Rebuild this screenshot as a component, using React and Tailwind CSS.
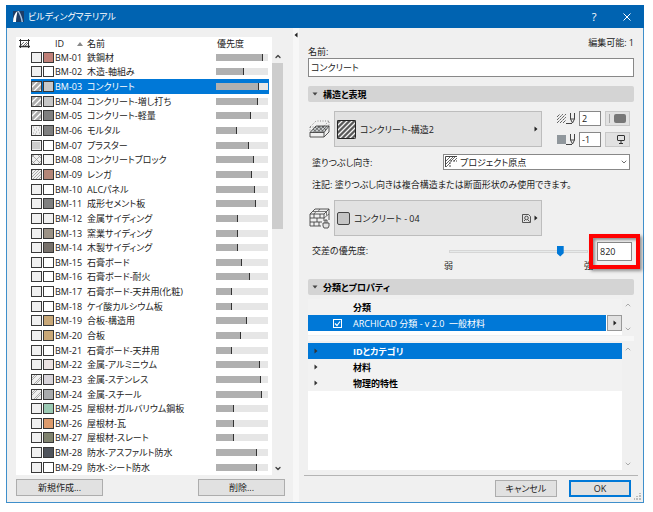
import { useState } from "react";
import clsx from "clsx";
import { ChevronDown, ChevronUp } from "lucide-react";

const MATERIALS = [
  { id: "BM-01", name: "鉄鋼材", color: "#c08078", priority: 90 },
  { id: "BM-02", name: "木造-軸組み", color: "#ffffff", priority: 54 },
  { id: "BM-03", name: "コンクリート", hatch: "wide", color: "#c8c8c8", priority: 83 },
  { id: "BM-04", name: "コンクリート-増し打ち", hatch: "wide", color: "#c8c8c8", priority: 80 },
  { id: "BM-05", name: "コンクリート-軽量", hatch: "wide", color: "#808080", priority: 68 },
  { id: "BM-06", name: "モルタル", hatch: "dots", color: "#808080", priority: 41 },
  { id: "BM-07", name: "プラスター", hatch: "fine", color: "#ffffff", priority: 63 },
  { id: "BM-08", name: "コンクリートブロック", hatch: "cross", color: "#f5f5f5", priority: 73 },
  { id: "BM-09", name: "レンガ", hatch: "dense", color: "#b48678", priority: 70 },
  { id: "BM-10", name: "ALCパネル", color: "#ffffff", priority: 75 },
  { id: "BM-11", name: "成形セメント板", color: "#808080", priority: 77 },
  { id: "BM-12", name: "金属サイディング", color: "#f0f0f0", priority: 42 },
  { id: "BM-13", name: "窯業サイディング", color: "#9c9286", priority: 42 },
  { id: "BM-14", name: "木製サイディング", color: "#77716b", priority: 42 },
  { id: "BM-15", name: "石膏ボード", color: "#ffffff", priority: 50 },
  { id: "BM-16", name: "石膏ボード-耐火", color: "#ffffff", priority: 65 },
  { id: "BM-17", name: "石膏ボード-天井用(化粧)", color: "#ffffff", priority: 31 },
  { id: "BM-18", name: "ケイ酸カルシウム板", color: "#ffffff", priority: 31 },
  { id: "BM-19", name: "合板-構造用", color: "#c9a878", priority: 60 },
  { id: "BM-20", name: "合板", color: "#c9a878", priority: 49 },
  { id: "BM-21", name: "石膏ボード-天井用", color: "#ffffff", priority: 31 },
  { id: "BM-22", name: "金属-アルミニウム", color: "#ebe2e2", priority: 84 },
  { id: "BM-23", name: "金属-ステンレス", hatch: "steel", color: "#d8d4da", priority: 87 },
  { id: "BM-24", name: "金属-スチール", hatch: "steel", color: "#a8aaac", priority: 89 },
  { id: "BM-25", name: "屋根材-ガルバリウム鋼板", color: "#9ccab4", priority: 35 },
  { id: "BM-26", name: "屋根材-瓦", color: "#dc9a6c", priority: 35 },
  { id: "BM-27", name: "屋根材-スレート", color: "#80836f", priority: 35 },
  { id: "BM-28", name: "防水-アスファルト防水", color: "#50545c", priority: 79 },
  { id: "BM-29", name: "防水-シート防水", color: "#ffffff", priority: 79 },
];

const HATCHES = {
  wide: "M-1 8L8 -1M1 12L12 1M7 12L12 7",
  steel: "M0 5L5 0M0 7L7 0M2 11L11 2M4 11L11 4M9 11L11 9",
  dense: "M0 3L3 0M0 6L6 0M0 9L9 0M1 11L11 1M4 11L11 4M7 11L11 7",
  cross: "M0 4L4 0M0 11L11 0M6 11L11 6M0 6L5 11M0 0L11 11M6 0L11 5",
  dots: "M2 2h1M5 3h1M8 2h1M3 5h1M7 5h1M2 8h1M5 7h1M8 8h1M4 9h1",
  fine: "M2 2v7M4 2v7M6 2v7M8 2v7",
};

function Swatch({ hatch, color = "#f0f0f0" }) {
  return (
    <svg width="11" height="11" viewBox="0 0 11 11" className="block shrink-0">
      <rect width="11" height="11" fill={hatch === "wide" ? "#acacac" : color} />
      {hatch && (
        <path
          d={HATCHES[hatch]}
          fill="none"
          stroke={hatch === "wide" ? "#fff" : "#8c8c8c"}
          strokeWidth={hatch === "wide" ? 1.3 : 0.7}
        />
      )}
      <rect x=".5" y=".5" width="10" height="10" fill="none" stroke="#383838" />
    </svg>
  );
}

function Triangle({ dir = "right", className }) {
  const points = {
    right: "1.5,0.5 4.500,3 1.5,5.500",
    left: "4.500,0.5 1.5,3 4.500,5.500",
    down: "0.5,1.5 5.500,1.5 3,4.500",
    up: "0,5 6,5 3,1",
  };
  return (
    <svg width="6" height="6" viewBox="0 0 6 6" className={clsx("shrink-0", className)}>
      <polygon points={points[dir]} fill="currentColor" />
    </svg>
  );
}

function PriorityBar({ value }) {
  return (
    <div className="h-[7px] w-[52px] bg-[#e6e6e6]">
      <div className="h-full border-r border-[#333] bg-[#b0b0b0]" style={{ width: `${value}%` }} />
    </div>
  );
}

function Button({ className, children, ...props }) {
  return (
    <button
      type="button"
      className={clsx("flex items-center justify-center border bg-[#e1e1e1]", className)}
      {...props}
    >
      {children}
    </button>
  );
}

function SectionHeader({ children }) {
  return (
    <h2 className="flex h-4 items-center gap-1 rounded-xs bg-[#d4d4d4] pl-1 font-bold text-black">
      <Triangle dir="down" className="text-[#444]" />
      <span className="pl-px">{children}</span>
    </h2>
  );
}

function MaterialList({ selected, onSelect }) {
  return (
    <div className="flex">
      <table className="h-[438px] w-64 table-fixed border-collapse bg-white text-left">
        <colgroup>
          <col className="w-[15px]" />
          <col className="w-6" />
          <col className="w-8" />
          <col className="w-[129px]" />
          <col className="w-[53px]" />
          <col />
        </colgroup>
        <thead>
          <tr className="h-[13px]">
            <th colSpan={2} className="p-0 pl-[3px]">
              <svg width="11" height="9" viewBox="0 0 11 9" fill="none" stroke="#333">
                <path d="M0 1.5h11M1.5 0v9M9.5 0v9" />
                <path d="M0 7.5h11" strokeWidth="1.500" />
                <path d="M2 6l3-3M4 7l4-4M6 7l3-3" strokeWidth=".7" />
              </svg>
            </th>
            <th className="p-0 font-normal">
              <div className="flex items-center justify-between pr-1">
                ID
                <Triangle dir="up" className="text-[#888]" />
              </div>
            </th>
            <th className="p-0 font-normal">名前</th>
            <th colSpan={2} className="p-0 pl-px font-normal">優先度</th>
          </tr>
        </thead>
        <tbody>
          {MATERIALS.map((m) => {
            const active = m.id === selected;
            const cell = clsx("p-0", active && "bg-[#0078d7] text-white");
            return (
              <tr key={m.id} onClick={() => onSelect(m.id)}>
                <td className="p-0" />
                <td className={cell}>
                  <div className="flex gap-px">
                    <Swatch hatch={m.hatch} />
                    <Swatch color={m.color} />
                  </div>
                </td>
                <td className={cell}>{m.id}</td>
                <td className={clsx(cell, "whitespace-nowrap")}>{m.name}</td>
                <td className={cell}>
                  <PriorityBar value={m.priority} />
                </td>
                <td className="p-0" />
              </tr>
            );
          })}
        </tbody>
      </table>
      <div className="mt-[13px] flex w-[11px] flex-col items-center bg-[#f0f0f0] text-[#444]">
        <ChevronUp className="h-[13px] w-2" strokeWidth={4} />
        <div className="h-[166px] w-full bg-[#cdcdcd]" />
        <ChevronDown className="mt-auto h-[13px] w-2" strokeWidth={4} />
      </div>
    </div>
  );
}

function FillIcon() {
  return (
    <svg width="21" height="20" viewBox="0 0 21 20" fill="none" stroke="#444" strokeWidth=".9">
      <path d="M1 13.500L7 7h13l-5 6.500z" fill="#ccd0d2" />
      <path d="M1 13.500V18h14v-4.500M15 18l5-5V7" />
      <path d="M4 10l4 3.500M6 8l6 5.500M9 7l6 6.500M13 7l4 4M4 13.500L11 7M8 13.500L15 7M12 13.500L18 7" strokeWidth=".7" />
      <path d="M1 8l6-6h13v5M1 8v4M1 8h13l6-6" strokeDasharray="1 1.500" strokeWidth=".6" />
    </svg>
  );
}

function SurfaceIcon() {
  return (
    <svg width="21" height="21" viewBox="0 0 21 21" fill="none" stroke="#444" strokeWidth=".9">
      <path d="M1 6L6 1h14l-5 5zM1 6v12h11M15 6v7M20 1v11M1 10h14M1 14h12M5 6v4M11 6v4M8 10v4M5 14v4M10 14v4" />
      <path d="M4 3.500h13M11 1L9 3.500M7 3.500L5 6M15 10l5-4M17.500 3.500v4" strokeWidth=".7" />
      <path d="M14 15h6v3l-1 2h-4l-1-2zM16 15v-3h2v3" fill="#e4e4e4" />
    </svg>
  );
}

function PenIcon() {
  return (
    <svg width="10" height="12" viewBox="0 0 10 12" fill="none" stroke="#444">
      <path d="M0 10.500h6" />
      <path d="M4.500 0v6l2 4 2-4V0M4.500 6h4" />
    </svg>
  );
}

function PenRow({ label, icon, value, children }) {
  return (
    <div className="flex h-[15px] items-center">
      {icon}
      <PenIcon />
      <input
        aria-label={label}
        defaultValue={value}
        className="ml-[3px] h-[15px] w-[22px] border border-[#888] bg-white px-0.5"
      />
      <Button aria-label={`${label}の設定`} className="ml-1 h-[15px] w-[25px] gap-1 border-[#c8c8c8]">
        {children}
      </Button>
    </div>
  );
}

function StructurePanel({ priority, setPriority }) {
  return (
    <div className="pr-1 pl-px">
      <div className="mt-[9px] flex items-center gap-1">
        <FillIcon />
        <Button className="h-9 w-[208px] gap-1 border-[#bdbdbd] px-0.5">
          <svg width="19" height="19" viewBox="0 0 19 19">
            <rect width="19" height="19" rx="1" fill="#5a5a5a" />
            <path
              d="M0 6L6 0M0 11L11 0M0 16L16 0M2 19L19 2M7 19L19 7M12 19L19 12M17 19L19 17"
              stroke="#f4f4f4"
              strokeWidth="1.300"
            />
            <rect x=".5" y=".5" width="18" height="18" rx="1" fill="none" stroke="#222" />
          </svg>
          コンクリート-構造2
          <Triangle className="ml-auto" />
        </Button>
        <div className="ml-auto flex flex-col gap-1.5">
          <PenRow
            label="切断面ペン"
            value="2"
            icon={
              <svg width="9" height="9" viewBox="0 0 9 9" stroke="#555" strokeWidth=".9">
                <path d="M0 3l3-3M0 6l6-6M0 9l9-9M3 9l6-6M6 9l3-3" strokeDasharray="3 .6" />
              </svg>
            }
          >
            <span className="h-[9px] w-px bg-[#aaa]" />
            <span className="h-[9px] w-3 rounded-xs bg-[#777]" />
          </PenRow>
          <PenRow label="背景ペン" value="-1" icon={<span className="size-[9px] bg-[#90979c]" />}>
            <svg width="10" height="9" viewBox="0 0 10 9" fill="none" stroke="#333" className="ml-1.5">
              <rect x="1.500" y=".5" width="7" height="5" rx=".5" />
              <path d="M5 6v2M3 8.500h4" />
            </svg>
          </PenRow>
        </div>
      </div>

      <div className="mt-[7px] flex h-4 items-center justify-between pl-[3px]">
        <label htmlFor="fill-direction">塗りつぶし向き:</label>
        <div className="relative w-[187px]">
          <select
            id="fill-direction"
            className="block h-4 w-full appearance-none border border-[#888] bg-white pl-4"
          >
            <option>プロジェクト原点</option>
          </select>
          <svg
            width="12"
            height="11"
            viewBox="0 0 12 11"
            fill="none"
            stroke="#444"
            className="pointer-events-none absolute top-0.5 left-0.5"
          >
            <path d="M.5 11V.5H12" />
            <path d="M5 11V5h7" strokeDasharray="2 1" />
            <path d="M1 5l4-4M1 8l7-7M1 11l4-4M6 5l4-4M9 5l3-3" strokeWidth=".8" />
          </svg>
          <ChevronDown className="pointer-events-none absolute top-1 right-0.5 size-2" />
        </div>
      </div>

      <p className="mt-2 pl-[3px] leading-[14px]">
        注記: 塗りつぶし向きは複合構造または断面形状のみ使用できます。
      </p>

      <div className="mt-2 flex items-center gap-1">
        <SurfaceIcon />
        <Button className="h-9 w-[208px] gap-1 border-[#bdbdbd] px-0.5">
          <span className="size-[13px] rounded-xs border border-[#444] bg-[#c4c4c4]" />
          コンクリート - 04
          <svg
            width="9"
            height="9"
            viewBox="0 0 9 9"
            fill="none"
            stroke="#444"
            strokeWidth=".9"
            className="ml-auto"
          >
            <path d="M.5 .5h6l2 2v6h-8zM2 7l1.500-1.500M5.500 5.500l2 2" />
            <circle cx="4.500" cy="4" r="1.800" />
          </svg>
          <Triangle className="-ml-0.5" />
        </Button>
      </div>

      <div className="mt-1.5 -mr-0.5 flex items-start pl-[3px]">
        <label htmlFor="priority" className="leading-[18px]">
          交差の優先度:
        </label>
        <div className="ml-auto w-[149px]">
          <input
            id="priority"
            type="range"
            min="0"
            max="999"
            value={priority}
            onChange={(e) => setPriority(Number(e.target.value))}
            className="ml-[5px] block h-[18px] w-[139px] appearance-none bg-transparent [&::-webkit-slider-runnable-track]:h-[3px] [&::-webkit-slider-runnable-track]:border [&::-webkit-slider-runnable-track]:border-[#d6d6d6] [&::-webkit-slider-runnable-track]:bg-[#e7eaea] [&::-webkit-slider-thumb]:-mt-[5px] [&::-webkit-slider-thumb]:h-[11px] [&::-webkit-slider-thumb]:w-[7px] [&::-webkit-slider-thumb]:appearance-none [&::-webkit-slider-thumb]:bg-[#0078d7] [&::-webkit-slider-thumb]:[clip-path:polygon(0_0,100%_0,100%_70%,50%_100%,0_70%)]"
          />
          <div className="flex justify-between leading-3">
            <span>弱</span>
            <span>強</span>
          </div>
        </div>
        <div className="relative ml-1 w-[35px]">
          <input
            aria-label="優先度の値"
            value={priority}
            onChange={(e) => setPriority(Number(e.target.value))}
            className="block h-[19px] w-full border border-[#888] bg-white px-0.5"
          />
          <div className="pointer-events-none absolute -inset-2 border-4 border-[#f00] shadow-[2px_2px_3px_#0006,inset_2px_2px_3px_#0006]" />
        </div>
      </div>
    </div>
  );
}

function ScrollArrows() {
  return (
    <div className="flex w-3 flex-col items-center justify-between py-0.5 text-[#aaa]">
      <ChevronUp className="size-2" strokeWidth={3} />
      <ChevronDown className="size-2" strokeWidth={3} />
    </div>
  );
}

function PropertiesPanel() {
  return (
    <div className="flex flex-1 flex-col">
      <div className="mt-1 flex h-9">
        <div className="min-w-0 flex-1 bg-white">
          <div className="flex h-4 items-center bg-[#f2f2f2] pl-[45px] font-bold text-black">分類</div>
          <div className="flex h-4 gap-px">
            <label className="flex flex-1 items-center gap-[11px] bg-[#0078d7] pl-[25px] text-white">
              <span className="relative">
                <input
                  type="checkbox"
                  defaultChecked
                  className="peer block size-[9px] appearance-none border border-white"
                />
                <svg
                  width="9"
                  height="9"
                  viewBox="0 0 9 9"
                  className="pointer-events-none absolute inset-0 hidden peer-checked:block"
                >
                  <path d="M2 4.500l2 2 3-4" fill="none" stroke="#fff" strokeWidth="1.200" />
                </svg>
              </span>
              <span className="whitespace-pre">ARCHICAD 分類 - v 2.0  一般材料</span>
            </label>
            <Button aria-label="分類を選択" className="h-4 w-[15px] border-[#999]">
              <Triangle />
            </Button>
          </div>
        </div>
        <ScrollArrows />
      </div>

      <div className="mt-px mb-0.5 h-[5px] bg-[#f7f7f7]" />

      <div className="flex flex-1">
        <ul className="flex-1 bg-white font-bold text-black">
          {["IDとカテゴリ", "材料", "物理的特性"].map((label, i) => (
            <li
              key={label}
              className={clsx(
                "flex h-4 items-center gap-[34px] pl-[5px]",
                i === 0 ? "bg-[#0078d7] text-white" : "bg-[#f2f2f2]"
              )}
            >
              <Triangle className="text-[#333]" />
              {label}
            </li>
          ))}
        </ul>
        <ScrollArrows />
      </div>
    </div>
  );
}

export default function App() {
  const [selected, setSelected] = useState("BM-03");
  const [priority, setPriority] = useState(820);

  return (
    <div
      lang="ja"
      className="flex min-h-screen bg-white pt-[5px] pr-[9px] pb-[9px] pl-1.5 font-['Open_Sans','Noto_Sans_CJK_JP',sans-serif] text-[9px] leading-[13px] text-[#222] [font-feature-settings:'palt']"
    >
      <main className="flex flex-1 flex-col border border-[#3f8fcb] bg-[#f0f0f0]">
        <header className="-mx-px -mt-px flex h-[23px] items-center bg-[#0063b1] px-[7px] text-white">
          <svg width="11" height="11" viewBox="0 0 11 11">
            <rect width="11" height="11" fill="#1d3d66" />
            <path d="M0 11C0 6 2 2 4.500 0C4 3 3 7 3 11z" fill="#fff" />
            <path d="M4.500 0h1.500C8 3 9.500 7 10 11H8.500C8 7 6.500 3 4.500 0z" fill="#a9c4e0" />
          </svg>
          <h1 className="ml-1">ビルディングマテリアル</h1>
          <button type="button" aria-label="ヘルプ" className="ml-auto w-4 text-[11px]">
            ?
          </button>
          <button type="button" aria-label="閉じる" className="mr-0.5 ml-[17px] flex size-4 items-center justify-center">
            <svg width="8" height="8" viewBox="0 0 8 8" stroke="#fff">
              <path d="M.5 .5l7 7M7.500 .5l-7 7" />
            </svg>
          </button>
        </header>

        <div className="flex flex-1">
          <section className="flex w-[286px] shrink-0 flex-col pt-[9px] pr-2 pl-[9px]">
            <MaterialList selected={selected} onSelect={setSelected} />
            <div className="mt-1 flex justify-between">
              <Button className="h-[17px] w-[87px] border-[#adadad]">新規作成...</Button>
              <Button className="h-[17px] w-[87px] border-[#adadad]">削除...</Button>
            </div>
          </section>

          <div className="flex w-1.5 shrink-0 justify-center bg-[#f7f7f7] pt-1">
            <Triangle dir="left" />
          </div>

          <section className="relative flex min-w-0 flex-1 flex-col pt-2 pr-[9px] pb-[5px] pl-[9px]">
            <p className="text-right">編集可能: 1</p>
            <label htmlFor="name" className="-mt-1 self-start">
              名前:
            </label>
            <input
              id="name"
              defaultValue="コンクリート"
              className="mb-[9px] h-[19px] w-full border border-[#888] bg-white px-0.5"
            />
            <SectionHeader>構造と表現</SectionHeader>
            <StructurePanel priority={priority} setPriority={setPriority} />
            <div className="mt-[7px]">
              <SectionHeader>分類とプロパティ</SectionHeader>
            </div>
            <PropertiesPanel />
            <hr className="-mx-1 mt-[5px] mb-1 border-[#b4b4b4]" />
            <div className="flex justify-end gap-3 pr-[3px]">
              <Button className="h-[17px] w-[62px] border-[#adadad]">キャンセル</Button>
              <Button className="h-[17px] w-[62px] border-2 border-[#0078d7]">OK</Button>
            </div>
            <svg width="7" height="7" viewBox="0 0 7 7" fill="#bbb" className="absolute right-0.5 bottom-0.5">
              <path d="M5 0h2v1H5zM5 2h2v2H5zM5 5h2v2H5zM2 3h2v1H2zM2 5h2v2H2zM0 5h1v2H0z" />
            </svg>
          </section>
        </div>
      </main>
    </div>
  );
}
